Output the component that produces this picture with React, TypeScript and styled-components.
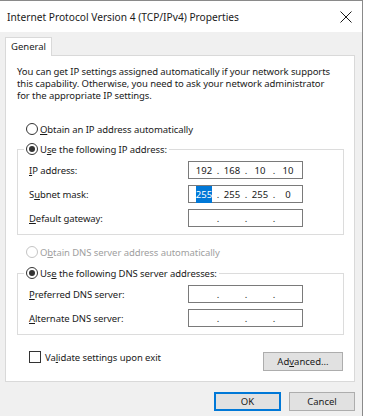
import React from "react";
import styled, { createGlobalStyle } from "styled-components";

const GlobalStyle = createGlobalStyle`
  body {
    margin: 0;
    background: #ffffff;
  }
  * {
    box-sizing: border-box;
  }
`;

const FONT = `"Noto Sans", "Open Sans", sans-serif`;

interface IpProps {
  octets?: string[];
  selectFirst?: boolean;
}

const IpField: React.FC<IpProps> = ({ octets = ["", "", "", ""], selectFirst }) => (
  <IpBox>
    {octets.map((o, i) => (
      <React.Fragment key={i}>
        {i > 0 && <Dot>.</Dot>}
        <Octet>{i === 0 && selectFirst ? <Selected>{o}</Selected> : o}</Octet>
      </React.Fragment>
    ))}
  </IpBox>
);

const Radio: React.FC<{ checked?: boolean; disabled?: boolean; children: React.ReactNode }> = ({
  checked,
  disabled,
  children,
}) => (
  <RadioLabel $disabled={disabled}>
    <RadioCircle $checked={checked} $disabled={disabled} />
    <span>{children}</span>
  </RadioLabel>
);

const App: React.FC = () => {
  return (
    <>
      <GlobalStyle />
      <Window>
        <TitleBar>
          <Title>Internet Protocol Version 4 (TCP/IPv4) Properties</Title>
          <CloseIcon width="12" height="12" viewBox="0 0 12 12">
            <path d="M0.5 0.5 L11.5 11.5 M11.5 0.5 L0.5 11.5" stroke="#1a1a1a" strokeWidth="1" />
          </CloseIcon>
        </TitleBar>
        <Body>
          <TabStrip>
            <Tab>General</Tab>
          </TabStrip>
          <Panel>
            <Intro>
              You can get IP settings assigned automatically if your network supports
              <br />
              this capability. Otherwise, you need to ask your network administrator
              <br />
              for the appropriate IP settings.
            </Intro>
            <LooseRadio>
              <Radio>
                <u>O</u>btain an IP address automatically
              </Radio>
            </LooseRadio>
            <Group $top={6}>
              <Legend>
                <Radio checked>
                  U<u>s</u>e the following IP address:
                </Radio>
              </Legend>
              <Rows>
                <Row>
                  <FieldLabel>
                    <u>I</u>P address:
                  </FieldLabel>
                  <IpField octets={["192", "168", "10", "10"]} />
                </Row>
                <Row>
                  <FieldLabel>
                    S<u>u</u>bnet mask:
                  </FieldLabel>
                  <IpField octets={["255", "255", "255", "0"]} selectFirst />
                </Row>
                <Row>
                  <FieldLabel>
                    <u>D</u>efault gateway:
                  </FieldLabel>
                  <IpField />
                </Row>
              </Rows>
            </Group>
            <LooseRadio $top={10}>
              <Radio disabled>
                O<u>b</u>tain DNS server address automatically
              </Radio>
            </LooseRadio>
            <Group $top={7}>
              <Legend>
                <Radio checked>
                  Us<u>e</u> the following DNS server addresses:
                </Radio>
              </Legend>
              <Rows>
                <Row>
                  <FieldLabel>
                    <u>P</u>referred DNS server:
                  </FieldLabel>
                  <IpField />
                </Row>
                <Row>
                  <FieldLabel>
                    <u>A</u>lternate DNS server:
                  </FieldLabel>
                  <IpField />
                </Row>
              </Rows>
            </Group>
            <Footer>
              <CheckLabel>
                <CheckBox />
                <span>
                  Va<u>l</u>idate settings upon exit
                </span>
              </CheckLabel>
              <Button $width={80}>
                Ad<u>v</u>anced...
              </Button>
            </Footer>
          </Panel>
          <Actions>
            <Button $width={67} $primary>
              OK
            </Button>
            <Button $width={66}>Cancel</Button>
          </Actions>
        </Body>
      </Window>
    </>
  );
};

export default App;

// style
const Window = styled.div`
  width: 363px;
  height: 416px;
  background: #f0f0f0;
  border-top: 1px solid #8a8a8a;
  border-right: 1px solid #8a8a8a;
  font-family: ${FONT};
  color: #1a1a1a;
  display: flex;
  flex-direction: column;
  overflow: hidden;
`;

const TitleBar = styled.div`
  height: 31px;
  flex-shrink: 0;
  background: #ffffff;
  display: flex;
  align-items: center;
  justify-content: space-between;
  padding: 0 10px 0 7px;
`;

const Title = styled.span`
  font-size: 10.2px;
`;

const CloseIcon = styled.svg`
  display: block;
`;

const Body = styled.div`
  padding: 5px 7px 0 5px;
  display: flex;
  flex-direction: column;
`;

const TabStrip = styled.div`
  display: flex;
`;

const Tab = styled.div`
  width: 47px;
  height: 19px;
  margin-bottom: -1px;
  background: #ffffff;
  border: 1px solid #d9d9d9;
  border-bottom: none;
  font-size: 9.5px;
  line-height: 17px;
  padding-left: 5px;
  position: relative;
  z-index: 1;
`;

const Panel = styled.div`
  width: 350px;
  height: 327px;
  background: #ffffff;
  border: 1px solid #d9d9d9;
  padding: 10px 10px 0 11px;
  display: flex;
  flex-direction: column;
`;

const Intro = styled.p`
  margin: 0;
  font-size: 9.5px;
  line-height: 12px;
  letter-spacing: -0.08px;
  white-space: nowrap;
`;

const LooseRadio = styled.div<{ $top?: number }>`
  margin-top: ${(p) => p.$top ?? 20}px;
  padding-left: 9px;
`;

const RadioLabel = styled.label<{ $disabled?: boolean }>`
  display: flex;
  align-items: center;
  gap: 2px;
  height: 14px;
  font-size: 9.5px;
  letter-spacing: -0.08px;
  color: ${(p) => (p.$disabled ? "#a0a0a0" : "#1a1a1a")};
  white-space: nowrap;
`;

const RadioCircle = styled.span<{ $checked?: boolean; $disabled?: boolean }>`
  width: 12px;
  height: 12px;
  border-radius: 50%;
  border: 1px solid ${(p) => (p.$disabled ? "#c4c4c4" : "#333333")};
  background: #ffffff;
  display: flex;
  align-items: center;
  justify-content: center;
  flex-shrink: 0;

  &::after {
    content: "";
    display: ${(p) => (p.$checked ? "block" : "none")};
    width: 6px;
    height: 6px;
    border-radius: 50%;
    background: #333333;
  }
`;

const Group = styled.fieldset<{ $top: number }>`
  margin: ${(p) => p.$top}px 0 0 0;
  padding: 0 0 7px 11px;
  border: 1px solid #dcdcdc;
  min-width: 0;
`;

const Legend = styled.legend`
  margin-left: -5px;
  padding: 0 2px 0 2px;
`;

const Rows = styled.div`
  display: flex;
  flex-direction: column;
  gap: 6px;
  padding-top: 5px;
`;

const Row = styled.div`
  display: flex;
  align-items: center;
`;

const FieldLabel = styled.span`
  width: 159px;
  font-size: 9.5px;
  letter-spacing: -0.08px;
`;

const IpBox = styled.div`
  width: 115px;
  height: 18px;
  border: 1px solid #7a7a7a;
  background: #ffffff;
  display: flex;
  align-items: center;
  padding-left: 4px;
  font-size: 9.5px;
`;

const Octet = styled.span`
  width: 22px;
  text-align: center;
`;

const Dot = styled.span`
  width: 6px;
  text-align: center;
`;

const Selected = styled.span`
  background: #0078d7;
  color: #ffffff;
  padding: 2px 0;
`;

const Footer = styled.div`
  margin-top: 16px;
  display: flex;
  justify-content: space-between;
  align-items: flex-start;
  padding-right: 1px;
`;

const CheckLabel = styled.label`
  display: flex;
  align-items: center;
  gap: 4px;
  padding-left: 12px;
  height: 12px;
  font-size: 9.5px;
  letter-spacing: -0.08px;
`;

const CheckBox = styled.span`
  width: 12px;
  height: 12px;
  border: 1px solid #333333;
  background: #ffffff;
  flex-shrink: 0;
`;

const Button = styled.button<{ $width: number; $primary?: boolean }>`
  width: ${(p) => p.$width}px;
  height: 19px;
  margin-top: 1px;
  padding: 0;
  background: #e1e1e1;
  border: ${(p) => (p.$primary ? "2px solid #0078d7" : "1px solid #adadad")};
  font-family: ${FONT};
  font-size: 9.5px;
  color: #1a1a1a;
  display: flex;
  align-items: center;
  justify-content: center;
`;

const Actions = styled.div`
  display: flex;
  justify-content: flex-end;
  gap: 8px;
  margin-top: 9px;
  padding-right: 0;
`;
